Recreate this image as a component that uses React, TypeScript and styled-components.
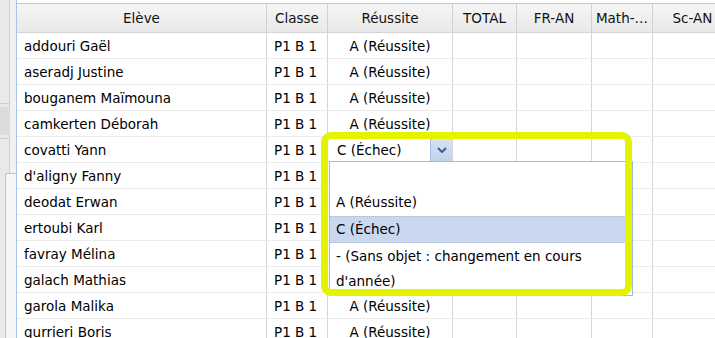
import styled, { createGlobalStyle } from "styled-components";

const GlobalStyle = createGlobalStyle`
  html, body {
    margin: 0;
    padding: 0;
    overflow: hidden;
    background: #ffffff;
  }
  body {
    font-family: "DejaVu Sans", "Liberation Sans", sans-serif;
    font-size: 13.5px;
    color: #000;
  }
`;

const COLUMNS = "250px 61px 125px 64px 75px 61px 80px";

const Page = styled.div`
  position: relative;
  display: flex;
  width: 715px;
  height: 338px;
  overflow: hidden;
`;

/* left strip of the neighbouring panel */
const SidePanel = styled.div`
  width: 16px;
  flex-shrink: 0;
  display: flex;
  flex-direction: column;
  border-right: 1px solid #a9c4e8;
  background: linear-gradient(to right, #e9e9e9 0, #e9e9e9 9px, #d2d2d2 9px, #d2d2d2 10px, #f1f1f1 10px);
`;

const SideSpacer = styled.div<{ $h: number }>`
  height: ${(p) => p.$h}px;
  flex-shrink: 0;
`;

const SideButton = styled.div`
  height: 28px;
  width: 10px;
  flex-shrink: 0;
  border-top: 1px solid #c9ced6;
  border-bottom: 1px solid #c9ced6;
  padding: 3px 0;
  box-sizing: content-box;
  &::before {
    content: "";
    display: block;
    height: 100%;
    width: 10px;
    background: #dcdcdc;
    border-radius: 0 4px 4px 0;
  }
`;

const SideBox = styled.div`
  flex: 1;
  margin-left: 5px;
  border-top: 1px solid #c4c4c4;
  border-left: 1px solid #c4c4c4;
  background: #f5f5f5;
`;

const Grid = styled.div`
  flex: 1;
  margin-top: 3px;
  border-top: 1px solid #b9cde9;
  overflow: hidden;
`;

const HeaderRow = styled.div`
  display: grid;
  grid-template-columns: ${COLUMNS};
  height: 28px;
  border-bottom: 1px solid #d4d4d4;
  background: linear-gradient(to bottom, #f5f5f5, #e9e9e9);
`;

const HeaderCell = styled.div`
  display: flex;
  align-items: center;
  justify-content: center;
  border-right: 1px solid #d0d0d0;
  white-space: nowrap;
  overflow: hidden;
  color: #111;
`;

const Row = styled.div`
  display: grid;
  grid-template-columns: ${COLUMNS};
  height: 25px;
  border-bottom: 1px solid #ececec;
  background: #fff;
`;

const Cell = styled.div<{ $align?: "left" | "center" }>`
  display: flex;
  align-items: center;
  justify-content: ${(p) => (p.$align === "center" ? "center" : "flex-start")};
  padding: 0 7px;
  border-right: 1px solid #d6d6d6;
  white-space: nowrap;
  overflow: hidden;
`;

const EditorCell = styled.div`
  display: flex;
  padding: 1px 0 0 1px;
  border-right: 1px solid #d6d6d6;
`;

const ComboInput = styled.div`
  flex: 1;
  display: flex;
  align-items: center;
  padding-left: 8px;
  background: #fff;
`;

const ComboTrigger = styled.div`
  width: 21px;
  display: flex;
  align-items: center;
  justify-content: center;
  border-left: 1px solid #a3bde3;
  background: linear-gradient(to bottom, #d8e4f4, #bfd2ec);
`;

const DropList = styled.div`
  position: absolute;
  left: 329px;
  top: 161px;
  width: 302px;
  border: 1px solid #99bbe8;
  background: #fff;
`;

const ListItem = styled.div<{ $selected?: boolean }>`
  min-height: 26px;
  line-height: 25px;
  padding: 0 6px 0 6px;
  box-sizing: border-box;
  border-top: 1px dotted ${(p) => (p.$selected ? "#a3bae9" : "transparent")};
  border-bottom: 1px dotted ${(p) => (p.$selected ? "#a3bae9" : "transparent")};
  background: ${(p) => (p.$selected ? "#c9d8ef" : "transparent")};
`;

const Highlight = styled.div`
  position: absolute;
  left: 321px;
  top: 132px;
  width: 311px;
  height: 164px;
  box-sizing: border-box;
  border: 7px solid #e4f400;
  border-radius: 10px;
  pointer-events: none;
`;

const students = [
  "addouri Gaël",
  "aseradj Justine",
  "bouganem Maïmouna",
  "camkerten Déborah",
  "covatti Yann",
  "d'aligny Fanny",
  "deodat Erwan",
  "ertoubi Karl",
  "favray Mélina",
  "galach Mathias",
  "garola Malika",
  "gurrieri Boris",
];

// rows whose Réussite cell sits under the open list
const covered = new Set(["d'aligny Fanny", "deodat Erwan", "ertoubi Karl", "favray Mélina", "galach Mathias"]);

const headers = ["Elève", "Classe", "Réussite", "TOTAL", "FR-AN", "Math-…", "Sc-AN"];

const options = ["\u00a0", "A (Réussite)", "C (Échec)", "- (Sans objet : changement en cours d'année)"];

const Chevron = () => (
  <svg width="10" height="6" viewBox="0 0 10 6">
    <path d="M1 1 L5 5 L9 1" fill="none" stroke="#3f5f93" strokeWidth="2" />
  </svg>
);

const App = () => {
  return (
    <>
      <GlobalStyle />
      <Page>
        <SidePanel>
          <SideSpacer $h={103} />
          <SideButton />
          <SideSpacer $h={34} />
          <SideBox />
        </SidePanel>
        <Grid>
          <HeaderRow>
            {headers.map((h) => (
              <HeaderCell key={h}>{h}</HeaderCell>
            ))}
          </HeaderRow>
          {students.map((name) => (
            <Row key={name}>
              <Cell>{name}</Cell>
              <Cell>P1 B 1</Cell>
              {name === "covatti Yann" ? (
                <EditorCell>
                  <ComboInput>C (Échec)</ComboInput>
                  <ComboTrigger>
                    <Chevron />
                  </ComboTrigger>
                </EditorCell>
              ) : (
                <Cell $align="center">{covered.has(name) ? "" : "A (Réussite)"}</Cell>
              )}
              <Cell />
              <Cell />
              <Cell />
              <Cell />
            </Row>
          ))}
        </Grid>
        <DropList>
          {options.map((o, i) => (
            <ListItem key={i} $selected={i === 2}>
              {o}
            </ListItem>
          ))}
        </DropList>
        <Highlight />
      </Page>
    </>
  );
};

export default App;
